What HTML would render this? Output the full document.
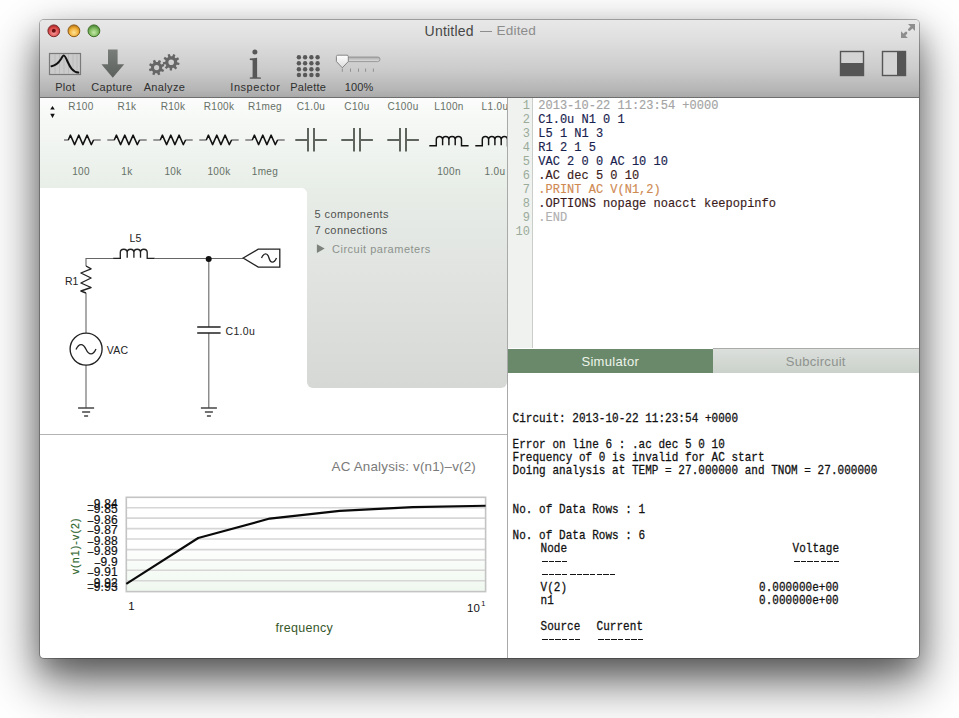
<!DOCTYPE html>
<html><head><meta charset="utf-8">
<style>
html,body{margin:0;padding:0;width:959px;height:718px;overflow:hidden;background:#fff;}
body{position:relative;font-family:"Liberation Sans",sans-serif;}
.t{position:absolute;white-space:pre;line-height:1;}
.mono{font-family:"Liberation Mono",monospace;}
#win{position:absolute;left:40px;top:20px;width:879px;height:638px;border-radius:4px 4px 4px 4px;
 box-shadow:0 22px 50px 2px rgba(0,0,0,0.6), 0 12px 24px 0 rgba(0,0,0,0.22), 0 0 0 1px rgba(0,0,0,0.28);background:#fff;}
#tb{position:absolute;left:40px;top:20px;width:879px;height:77px;border-radius:4px 4px 0 0;background:linear-gradient(#e8e8e8 0px,#e0e0e0 18px,#cbcbcb 50px,#b5b5b5 70px,#a9a9a9 77px);border-bottom:1px solid #6e6e6e;}
svg{position:absolute;left:0;top:0;overflow:visible;}
.tl{font-size:11px;color:#2e2e2e;top:81px;}
</style></head>
<body>

<div id="win"></div><div id="tb"></div>
<div class="t" style="left:424.60px;top:23.95px;font-family:'Liberation Sans';font-size:14px;color:#474747;letter-spacing:0.2px;">Untitled</div>
<div style="position:absolute;left:479.8px;top:31.3px;width:12px;height:1.2px;background:#8e8e8e;"></div>
<div class="t" style="left:496.60px;top:24.29px;font-family:'Liberation Sans';font-size:13.6px;color:#8c8c8c;letter-spacing:0.15px;">Edited</div>
<div class="t" style="left:55.20px;top:82.19px;font-family:'Liberation Sans';font-size:11px;color:#2f2f2f;letter-spacing:0.3px;">Plot</div>
<div class="t" style="left:91.30px;top:82.19px;font-family:'Liberation Sans';font-size:11px;color:#2f2f2f;letter-spacing:0.3px;">Capture</div>
<div class="t" style="left:143.70px;top:82.19px;font-family:'Liberation Sans';font-size:11px;color:#2f2f2f;letter-spacing:0.35px;">Analyze</div>
<div class="t" style="left:230.30px;top:82.19px;font-family:'Liberation Sans';font-size:11px;color:#2f2f2f;letter-spacing:0.55px;">Inspector</div>
<div class="t" style="left:290.20px;top:82.19px;font-family:'Liberation Sans';font-size:11px;color:#2f2f2f;letter-spacing:0.25px;">Palette</div>
<div class="t" style="left:344.80px;top:82.19px;font-family:'Liberation Sans';font-size:11px;color:#2f2f2f;letter-spacing:0.1px;">100%</div>
<svg width="959" height="718" viewBox="0 0 959 718">
<defs>
<radialGradient id="gr" cx="50%" cy="65%" r="60%"><stop offset="0" stop-color="#f7a0a0"/><stop offset="0.6" stop-color="#e25555"/><stop offset="1" stop-color="#b02525"/></radialGradient>
<radialGradient id="go" cx="50%" cy="65%" r="60%"><stop offset="0" stop-color="#fde29a"/><stop offset="0.6" stop-color="#f2b23a"/><stop offset="1" stop-color="#c07a10"/></radialGradient>
<radialGradient id="gg" cx="50%" cy="65%" r="60%"><stop offset="0" stop-color="#c4e8a8"/><stop offset="0.6" stop-color="#80bc60"/><stop offset="1" stop-color="#4e8836"/></radialGradient>
<linearGradient id="arrowg" x1="0" y1="0" x2="0" y2="1"><stop offset="0" stop-color="#7a7e7a"/><stop offset="1" stop-color="#5c605c"/></linearGradient>
<linearGradient id="thumbg" x1="0" y1="0" x2="0" y2="1"><stop offset="0" stop-color="#ffffff"/><stop offset="1" stop-color="#dcdcdc"/></linearGradient>
<linearGradient id="trackg" x1="0" y1="0" x2="0" y2="1"><stop offset="0" stop-color="#a8a8a8"/><stop offset="1" stop-color="#e0e0e0"/></linearGradient>
</defs>
<circle cx="53.8" cy="30.8" r="5.9" fill="url(#gr)" stroke="#7a2a2a" stroke-width="1"/>
<circle cx="53.8" cy="30.8" r="2" fill="#6a1010"/>
<circle cx="73.9" cy="30.8" r="5.9" fill="url(#go)" stroke="#8a5a18" stroke-width="1"/>
<circle cx="93.9" cy="30.8" r="5.9" fill="url(#gg)" stroke="#3e6e28" stroke-width="1"/>
<g fill="#8e8e8e" stroke="#8e8e8e" stroke-width="2.6" stroke-linecap="round"><line x1="911.5" y1="27.5" x2="909.3" y2="29.7"/><line x1="904" y1="35" x2="906" y2="33"/><path d="M915 24 L908 24 L915 31 Z" stroke="none"/><path d="M901 38 L901 31.3 L907.8 38 Z" stroke="none"/></g>
<rect x="840.5" y="51.5" width="23" height="24" fill="#d4d4d4" stroke="#555" stroke-width="1.4"/>
<rect x="840" y="63" width="24" height="13" fill="#555"/>
<rect x="882.5" y="51.5" width="23" height="24" fill="#d4d4d4" stroke="#555" stroke-width="1.4"/>
<rect x="897" y="51" width="9" height="25" fill="#555"/>
<rect x="49.5" y="53.5" width="31" height="21" fill="#cbcbcb" stroke="#7a7a7a" stroke-width="1.2"/>
<line x1="55" y1="54" x2="55" y2="74" stroke="#b8b8b8" stroke-width="0.8"/>
<line x1="59.5" y1="54" x2="59.5" y2="74" stroke="#b8b8b8" stroke-width="0.8"/>
<line x1="64" y1="54" x2="64" y2="74" stroke="#b8b8b8" stroke-width="0.8"/>
<line x1="68.5" y1="54" x2="68.5" y2="74" stroke="#b8b8b8" stroke-width="0.8"/>
<line x1="73" y1="54" x2="73" y2="74" stroke="#b8b8b8" stroke-width="0.8"/>
<line x1="77" y1="54" x2="77" y2="74" stroke="#b8b8b8" stroke-width="0.8"/>
<path d="M51.5 66.2 C56 65.5 58.5 63 61 59 C62 57.2 63 55.5 63.8 55.6 C64.8 55.6 66 58 67.5 61.5 C70 67 72.5 72 78.3 72.6" fill="none" stroke="#111" stroke-width="2" stroke-linecap="round"/>
<path d="M108 49.5 H117.6 V64.2 H124.2 L112.8 77.8 L101.4 64.2 H108 Z" fill="url(#arrowg)"/>
<path d="M162.09 68.71 L164.16 69.89 L163.15 72.01 L160.93 71.15 L159.69 72.27 L160.33 74.57 L158.11 75.35 L157.15 73.17 L155.49 73.09 L154.31 75.16 L152.19 74.15 L153.05 71.93 L151.93 70.69 L149.63 71.33 L148.85 69.11 L151.03 68.15 L151.11 66.49 L149.04 65.31 L150.05 63.19 L152.27 64.05 L153.51 62.93 L152.87 60.63 L155.09 59.85 L156.05 62.03 L157.71 62.11 L158.89 60.04 L161.01 61.05 L160.15 63.27 L161.27 64.51 L163.57 63.87 L164.35 66.09 L162.17 67.05 Z M159.20 67.60 A2.6 2.6 0 1 0 154.00 67.60 A2.6 2.6 0 1 0 159.20 67.60 Z" fill="#666" fill-rule="evenodd"/>
<path d="M177.20 62.20 L179.57 62.90 L179.09 65.07 L176.65 64.72 L175.80 66.06 L177.16 68.12 L175.40 69.47 L173.75 67.63 L172.24 68.11 L171.96 70.57 L169.74 70.47 L169.67 68.00 L168.20 67.40 L166.41 69.10 L164.77 67.60 L166.30 65.66 L165.56 64.25 L163.09 64.40 L162.80 62.20 L165.22 61.70 L165.56 60.15 L163.57 58.68 L164.77 56.80 L166.94 57.97 L168.20 57.00 L167.62 54.60 L169.74 53.93 L170.66 56.22 L172.24 56.29 L173.35 54.08 L175.40 54.93 L174.62 57.27 L175.80 58.34 L178.06 57.36 L179.09 59.33 L176.99 60.63 Z M174.00 62.20 A2.8 2.8 0 1 0 168.40 62.20 A2.8 2.8 0 1 0 174.00 62.20 Z" fill="#666" fill-rule="evenodd"/>
<circle cx="254.9" cy="52.1" r="2.5" fill="#575757"/>
<path d="M249.8 58.6 L257.1 57.8 L257.1 77.2 L260.9 77.4 L260.9 78.8 L249.8 78.8 L249.8 77.4 L252.6 77.2 L252.6 60.2 L249.8 60.0 Z" fill="#575757"/>
<circle cx="298.9" cy="57.3" r="2.2" fill="#585858"/>
<circle cx="298.9" cy="63.2" r="2.2" fill="#585858"/>
<circle cx="298.9" cy="69.2" r="2.2" fill="#585858"/>
<circle cx="298.9" cy="75.0" r="2.2" fill="#585858"/>
<circle cx="305.1" cy="57.3" r="2.2" fill="#585858"/>
<circle cx="305.1" cy="63.2" r="2.2" fill="#585858"/>
<circle cx="305.1" cy="69.2" r="2.2" fill="#585858"/>
<circle cx="305.1" cy="75.0" r="2.2" fill="#585858"/>
<circle cx="311.4" cy="57.3" r="2.2" fill="#585858"/>
<circle cx="311.4" cy="63.2" r="2.2" fill="#585858"/>
<circle cx="311.4" cy="69.2" r="2.2" fill="#585858"/>
<circle cx="311.4" cy="75.0" r="2.2" fill="#585858"/>
<circle cx="317.6" cy="57.3" r="2.2" fill="#585858"/>
<circle cx="317.6" cy="63.2" r="2.2" fill="#585858"/>
<circle cx="317.6" cy="69.2" r="2.2" fill="#585858"/>
<circle cx="317.6" cy="75.0" r="2.2" fill="#585858"/>
<rect x="336.5" y="57" width="43.5" height="4.6" rx="2.3" fill="url(#trackg)" stroke="#8a8a8a" stroke-width="0.8"/>
<line x1="342.3" y1="68.5" x2="342.3" y2="71.8" stroke="#8a8a8a" stroke-width="0.9"/>
<line x1="350.5" y1="68.5" x2="350.5" y2="71.8" stroke="#8a8a8a" stroke-width="0.9"/>
<line x1="358.5" y1="68.5" x2="358.5" y2="71.8" stroke="#8a8a8a" stroke-width="0.9"/>
<line x1="365.6" y1="68.5" x2="365.6" y2="71.8" stroke="#8a8a8a" stroke-width="0.9"/>
<line x1="373.4" y1="68.5" x2="373.4" y2="71.8" stroke="#8a8a8a" stroke-width="0.9"/>
<path d="M336.4 56.5 Q336.4 55.2 337.7 55.2 L347 55.2 Q348.3 55.2 348.3 56.5 L348.3 61.5 L342.3 67.8 L336.4 61.5 Z" fill="url(#thumbg)" stroke="#7a7a7a" stroke-width="0.9"/>
</svg>
<div style="position:absolute;left:40px;top:98px;width:467px;height:90px;background:linear-gradient(#fbfcfb,#f3f6f3 40%,#e8eee8);"></div>
<div style="position:absolute;left:307px;top:187.5px;width:199.5px;height:200.5px;border-radius:0 0 6px 6px;background:linear-gradient(#e8ede8,#e0e3e0 45%,#d5d8d5);"></div>
<div style="position:absolute;left:302px;top:188px;width:5px;height:5px;background:radial-gradient(circle at 0 100%,#fff 0,#fff 4.5px,#e9ede9 5px);"></div>
<div style="position:absolute;left:507px;top:98px;width:1px;height:560px;background:#a9a9a9;"></div>
<div style="position:absolute;left:40px;top:434px;width:467px;height:1px;background:#b4b4b4;"></div>
<div style="position:absolute;left:64px;top:98px;width:443px;height:90px;overflow:hidden;"><div style="position:absolute;left:-64px;top:-98px;width:959px;height:718px;"><div class="t" style="left:51px;top:101.5px;width:60px;text-align:center;font-size:10px;color:#667066;letter-spacing:0.35px;">R100</div><div class="t" style="left:51px;top:167px;width:60px;text-align:center;font-size:10px;color:#667066;letter-spacing:0.35px;">100</div><div class="t" style="left:97px;top:101.5px;width:60px;text-align:center;font-size:10px;color:#667066;letter-spacing:0.35px;">R1k</div><div class="t" style="left:97px;top:167px;width:60px;text-align:center;font-size:10px;color:#667066;letter-spacing:0.35px;">1k</div><div class="t" style="left:143px;top:101.5px;width:60px;text-align:center;font-size:10px;color:#667066;letter-spacing:0.35px;">R10k</div><div class="t" style="left:143px;top:167px;width:60px;text-align:center;font-size:10px;color:#667066;letter-spacing:0.35px;">10k</div><div class="t" style="left:189px;top:101.5px;width:60px;text-align:center;font-size:10px;color:#667066;letter-spacing:0.35px;">R100k</div><div class="t" style="left:189px;top:167px;width:60px;text-align:center;font-size:10px;color:#667066;letter-spacing:0.35px;">100k</div><div class="t" style="left:235px;top:101.5px;width:60px;text-align:center;font-size:10px;color:#667066;letter-spacing:0.35px;">R1meg</div><div class="t" style="left:235px;top:167px;width:60px;text-align:center;font-size:10px;color:#667066;letter-spacing:0.35px;">1meg</div><div class="t" style="left:281px;top:101.5px;width:60px;text-align:center;font-size:10px;color:#667066;letter-spacing:0.35px;">C1.0u</div><div class="t" style="left:327px;top:101.5px;width:60px;text-align:center;font-size:10px;color:#667066;letter-spacing:0.35px;">C10u</div><div class="t" style="left:373px;top:101.5px;width:60px;text-align:center;font-size:10px;color:#667066;letter-spacing:0.35px;">C100u</div><div class="t" style="left:419px;top:101.5px;width:60px;text-align:center;font-size:10px;color:#667066;letter-spacing:0.35px;">L100n</div><div class="t" style="left:419px;top:167px;width:60px;text-align:center;font-size:10px;color:#667066;letter-spacing:0.35px;">100n</div><div class="t" style="left:465px;top:101.5px;width:60px;text-align:center;font-size:10px;color:#667066;letter-spacing:0.35px;">L1.0u</div><div class="t" style="left:465px;top:167px;width:60px;text-align:center;font-size:10px;color:#667066;letter-spacing:0.35px;">1.0u</div><svg width="959" height="718" viewBox="0 0 959 718">
<line x1="61.3" y1="140" x2="68.6" y2="140" stroke="#777" stroke-width="1.5"/>
<line x1="93.3" y1="140" x2="100.69999999999999" y2="140" stroke="#777" stroke-width="1.5"/>
<polyline points="68.3,140 70.39999999999999,135.1 74.6,144.6 78.8,135.1 82.89999999999999,144.6 87.1,135.1 91.3,144.6 93.6,140" fill="none" stroke="#111" stroke-width="1.5" stroke-linejoin="round"/>
<line x1="107.3" y1="140" x2="114.6" y2="140" stroke="#777" stroke-width="1.5"/>
<line x1="139.3" y1="140" x2="146.7" y2="140" stroke="#777" stroke-width="1.5"/>
<polyline points="114.3,140 116.39999999999999,135.1 120.6,144.6 124.8,135.1 128.9,144.6 133.1,135.1 137.3,144.6 139.6,140" fill="none" stroke="#111" stroke-width="1.5" stroke-linejoin="round"/>
<line x1="153.3" y1="140" x2="160.60000000000002" y2="140" stroke="#777" stroke-width="1.5"/>
<line x1="185.3" y1="140" x2="192.70000000000002" y2="140" stroke="#777" stroke-width="1.5"/>
<polyline points="160.3,140 162.4,135.1 166.60000000000002,144.6 170.8,135.1 174.9,144.6 179.10000000000002,135.1 183.3,144.6 185.60000000000002,140" fill="none" stroke="#111" stroke-width="1.5" stroke-linejoin="round"/>
<line x1="199.3" y1="140" x2="206.60000000000002" y2="140" stroke="#777" stroke-width="1.5"/>
<line x1="231.3" y1="140" x2="238.70000000000002" y2="140" stroke="#777" stroke-width="1.5"/>
<polyline points="206.3,140 208.4,135.1 212.60000000000002,144.6 216.8,135.1 220.9,144.6 225.10000000000002,135.1 229.3,144.6 231.60000000000002,140" fill="none" stroke="#111" stroke-width="1.5" stroke-linejoin="round"/>
<line x1="245.3" y1="140" x2="252.60000000000002" y2="140" stroke="#777" stroke-width="1.5"/>
<line x1="277.3" y1="140" x2="284.7" y2="140" stroke="#777" stroke-width="1.5"/>
<polyline points="252.3,140 254.4,135.1 258.6,144.6 262.8,135.1 266.90000000000003,144.6 271.1,135.1 275.3,144.6 277.6,140" fill="none" stroke="#111" stroke-width="1.5" stroke-linejoin="round"/>
<g stroke="#5f645f" stroke-width="2"><line x1="295.3" y1="140" x2="308.0" y2="140"/><line x1="314.0" y1="140" x2="326.90000000000003" y2="140"/><line x1="308.0" y1="128.1" x2="308.0" y2="151.6"/><line x1="314.0" y1="128.1" x2="314.0" y2="151.6"/></g>
<g stroke="#5f645f" stroke-width="2"><line x1="341.3" y1="140" x2="354.0" y2="140"/><line x1="360.0" y1="140" x2="372.90000000000003" y2="140"/><line x1="354.0" y1="128.1" x2="354.0" y2="151.6"/><line x1="360.0" y1="128.1" x2="360.0" y2="151.6"/></g>
<g stroke="#5f645f" stroke-width="2"><line x1="387.3" y1="140" x2="400.0" y2="140"/><line x1="406.0" y1="140" x2="418.90000000000003" y2="140"/><line x1="400.0" y1="128.1" x2="400.0" y2="151.6"/><line x1="406.0" y1="128.1" x2="406.0" y2="151.6"/></g>
<path d="M429.3 145.7 H436.3 V139.5 A3.15 2.99 0 0 1 442.60 139.5 V145.2 V139.5 A3.15 2.99 0 0 1 448.90 139.5 V145.2 V139.5 A3.15 2.99 0 0 1 455.20 139.5 V145.2 V139.5 A3.15 2.99 0 0 1 461.50 139.5 V145.7 H468.6" fill="none" stroke="#111" stroke-width="1.45"/>
<path d="M475.3 145.7 H482.3 V139.5 A3.15 2.99 0 0 1 488.60 139.5 V145.2 V139.5 A3.15 2.99 0 0 1 494.90 139.5 V145.2 V139.5 A3.15 2.99 0 0 1 501.20 139.5 V145.2 V139.5 A3.15 2.99 0 0 1 507.50 139.5 V145.7 H514.6" fill="none" stroke="#111" stroke-width="1.45"/>
</svg></div></div>
<svg width="959" height="718" viewBox="0 0 959 718"><path d="M50.2 109.6 L52.5 106 L54.8 109.6 Z M50.2 113.8 L54.8 113.8 L52.5 117.9 Z" fill="#111"/></svg>
<svg width="959" height="718" viewBox="0 0 959 718"><g fill="none" stroke="#666" stroke-width="1.1"><path d="M86 266 V258.5 H113.1"/><path d="M154.7 258.5 H243.2"/><path d="M86 293 V333"/><path d="M86 365 V408"/><path d="M208.8 258.5 V327"/><path d="M208.8 333 V408"/></g><g fill="none" stroke="#222" stroke-width="1.35"><polyline points="86,266 91.1,268.8 80.9,273 91.1,278 80.9,283 91.1,287.5 80.9,291 86,293" stroke-linejoin="round"/><path d="M113.1 258.3 H120.3 V252.5 C120.30 248.2 127.20 248.2 127.20 252.5 V257.8 V252.5 C127.20 248.2 133.90 248.2 133.90 252.5 V257.8 V252.5 C133.90 248.2 140.50 248.2 140.50 252.5 V257.8 V252.5 C140.50 248.2 147.20 248.2 147.20 252.5 V258.3 H154.7"/><circle cx="86.1" cy="349.1" r="16"/><path d="M76 349.5 C79 343 83 343 86 349.2 C89 355.5 93 355.5 96 349"/><path d="M197.2 327 H220.6 M197.2 333.1 H220.6" stroke-width="1.5"/><path d="M243.2 258 L258.2 249.2 H279.8 V267.1 H258.2 Z" stroke-width="1.3"/><path d="M261.5 258 C264 252.5 267.5 252.5 269 258 C270.5 263.5 274 263.5 276.5 258"/></g><g stroke="#444" stroke-width="1.5"><line x1="78.1" y1="408" x2="94.1" y2="408"/><line x1="82.1" y1="412" x2="90.1" y2="412"/><line x1="84.1" y1="416" x2="88.1" y2="416"/></g><g stroke="#444" stroke-width="1.5"><line x1="200.9" y1="408" x2="216.9" y2="408"/><line x1="204.9" y1="412" x2="212.9" y2="412"/><line x1="206.9" y1="416" x2="210.9" y2="416"/></g><circle cx="208.7" cy="259" r="3" fill="#111"/></svg>
<div class="t" style="left:129.60px;top:233.11px;font-family:'Liberation Sans';font-size:10.5px;color:#222;">L5</div>
<div class="t" style="left:65.00px;top:276.11px;font-family:'Liberation Sans';font-size:10.5px;color:#222;">R1</div>
<div class="t" style="left:106.80px;top:345.11px;font-family:'Liberation Sans';font-size:10.5px;color:#222;letter-spacing:0.2px;">VAC</div>
<div class="t" style="left:225.50px;top:326.11px;font-family:'Liberation Sans';font-size:10.5px;color:#222;letter-spacing:0.3px;">C1.0u</div>
<div class="t" style="left:314.50px;top:208.69px;font-family:'Liberation Sans';font-size:11px;color:#505250;letter-spacing:0.45px;">5 components</div>
<div class="t" style="left:314.50px;top:225.09px;font-family:'Liberation Sans';font-size:11px;color:#505250;letter-spacing:0.4px;">7 connections</div>
<div class="t" style="left:332.00px;top:243.89px;font-family:'Liberation Sans';font-size:11px;color:#8d928d;letter-spacing:0.5px;">Circuit parameters</div>
<svg width="959" height="718" viewBox="0 0 959 718"><path d="M316.9 244.3 L324.7 248.6 L316.9 252.9 Z" fill="#7d827d"/></svg>
<svg width="959" height="718" viewBox="0 0 959 718"><defs><linearGradient id="plotbg" x1="0" y1="0" x2="0" y2="1"><stop offset="0" stop-color="#ffffff"/><stop offset="0.5" stop-color="#ffffff"/><stop offset="1" stop-color="#eff8ef"/></linearGradient></defs><rect x="126.3" y="497.3" width="359.3" height="94" fill="url(#plotbg)"/><line x1="127" y1="507.7" x2="485" y2="507.7" stroke="#d6d6d6" stroke-width="1.6"/><line x1="127" y1="518.1" x2="485" y2="518.1" stroke="#d6d6d6" stroke-width="1.6"/><line x1="127" y1="528.6" x2="485" y2="528.6" stroke="#d6d6d6" stroke-width="1.6"/><line x1="127" y1="539" x2="485" y2="539" stroke="#d6d6d6" stroke-width="1.6"/><line x1="127" y1="549.6" x2="485" y2="549.6" stroke="#d6d6d6" stroke-width="1.6"/><line x1="127" y1="560" x2="485" y2="560" stroke="#d6d6d6" stroke-width="1.6"/><line x1="127" y1="570.3" x2="485" y2="570.3" stroke="#d6d6d6" stroke-width="1.6"/><line x1="127" y1="580.7" x2="485" y2="580.7" stroke="#d6d6d6" stroke-width="1.6"/><rect x="126.3" y="497.3" width="359.3" height="94.3" fill="none" stroke="#c4c4c4" stroke-width="1.6"/><polyline points="126.3,583.8 198.2,538 269.7,518.6 339.7,510.9 412.9,507.1 485.6,505.7" fill="none" stroke="#0a0a0a" stroke-width="2.1" stroke-linejoin="round"/><text x="0" y="0" transform="translate(78.6,545.8) rotate(-90)" text-anchor="middle" font-family="Liberation Sans" font-size="10.5" letter-spacing="1.15" fill="#2f662f" stroke="#2f662f" stroke-width="0.2">v(n1)-v(2)</text></svg>
<div class="t" style="left:60px;top:498.1px;width:58px;text-align:right;font-size:12px;color:#111;letter-spacing:0.25px;transform:scaleY(1.05);-webkit-text-stroke:0.2px #111;"><span style="font-size:10px;position:relative;top:-0.5px;">–</span>9.84</div>
<div class="t" style="left:60px;top:503.2px;width:58px;text-align:right;font-size:12px;color:#111;letter-spacing:0.25px;transform:scaleY(1.05);-webkit-text-stroke:0.2px #111;"><span style="font-size:10px;position:relative;top:-0.5px;">–</span>9.85</div>
<div class="t" style="left:60px;top:513.5px;width:58px;text-align:right;font-size:12px;color:#111;letter-spacing:0.25px;transform:scaleY(1.05);-webkit-text-stroke:0.2px #111;"><span style="font-size:10px;position:relative;top:-0.5px;">–</span>9.86</div>
<div class="t" style="left:60px;top:524.0px;width:58px;text-align:right;font-size:12px;color:#111;letter-spacing:0.25px;transform:scaleY(1.05);-webkit-text-stroke:0.2px #111;"><span style="font-size:10px;position:relative;top:-0.5px;">–</span>9.87</div>
<div class="t" style="left:60px;top:534.6px;width:58px;text-align:right;font-size:12px;color:#111;letter-spacing:0.25px;transform:scaleY(1.05);-webkit-text-stroke:0.2px #111;"><span style="font-size:10px;position:relative;top:-0.5px;">–</span>9.88</div>
<div class="t" style="left:60px;top:545.1px;width:58px;text-align:right;font-size:12px;color:#111;letter-spacing:0.25px;transform:scaleY(1.05);-webkit-text-stroke:0.2px #111;"><span style="font-size:10px;position:relative;top:-0.5px;">–</span>9.89</div>
<div class="t" style="left:60px;top:555.7px;width:58px;text-align:right;font-size:12px;color:#111;letter-spacing:0.25px;transform:scaleY(1.05);-webkit-text-stroke:0.2px #111;"><span style="font-size:10px;position:relative;top:-0.5px;">–</span>9.9</div>
<div class="t" style="left:60px;top:566.2px;width:58px;text-align:right;font-size:12px;color:#111;letter-spacing:0.25px;transform:scaleY(1.05);-webkit-text-stroke:0.2px #111;"><span style="font-size:10px;position:relative;top:-0.5px;">–</span>9.91</div>
<div class="t" style="left:60px;top:576.5px;width:58px;text-align:right;font-size:12px;color:#111;letter-spacing:0.25px;transform:scaleY(1.05);-webkit-text-stroke:0.2px #111;"><span style="font-size:10px;position:relative;top:-0.5px;">–</span>9.92</div>
<div class="t" style="left:60px;top:581.2px;width:58px;text-align:right;font-size:12px;color:#111;letter-spacing:0.25px;transform:scaleY(1.05);-webkit-text-stroke:0.2px #111;"><span style="font-size:10px;position:relative;top:-0.5px;">–</span>9.93</div>
<div class="t" style="left:331.50px;top:459.86px;font-family:'Liberation Sans';font-size:13.4px;color:#7a7a7a;letter-spacing:0.2px;">AC Analysis: v(n1)–v(2)</div>
<div class="t" style="left:128.30px;top:600.57px;font-family:'Liberation Sans';font-size:11.5px;color:#111;">1</div>
<div class="t" style="left:467.00px;top:602.57px;font-family:'Liberation Sans';font-size:11.5px;color:#111;">10</div>
<div class="t" style="left:481.30px;top:600.45px;font-family:'Liberation Sans';font-size:7.5px;color:#111;">1</div>
<div class="t" style="left:275.50px;top:622.22px;font-family:'Liberation Sans';font-size:12.5px;color:#38582a;letter-spacing:0.3px;">frequency</div>
<div style="position:absolute;left:508px;top:98px;width:24px;height:250px;background:#eff2ef;border-right:1px solid #c9cec9;"></div>
<div class="t mono" style="left:490px;top:99.8px;width:40px;text-align:right;font-size:12px;color:#9aab9a;transform:scaleY(1.12);transform-origin:0 80%;">1</div>
<div class="t" style="left:538.30px;top:100.21px;font-family:'Liberation Mono';font-size:12px;color:#a4a4a4;transform:scaleY(1.08);transform-origin:0 80%;-webkit-text-stroke:0.15px #a4a4a4;">2013-10-22 11:23:54 +0000</div>
<div class="t mono" style="left:490px;top:113.8px;width:40px;text-align:right;font-size:12px;color:#9aab9a;transform:scaleY(1.12);transform-origin:0 80%;">2</div>
<div class="t" style="left:538.30px;top:114.21px;font-family:'Liberation Mono';font-size:12px;color:#18224e;transform:scaleY(1.08);transform-origin:0 80%;-webkit-text-stroke:0.15px #18224e;">C1.0u N1 0 1</div>
<div class="t mono" style="left:490px;top:127.8px;width:40px;text-align:right;font-size:12px;color:#9aab9a;transform:scaleY(1.12);transform-origin:0 80%;">3</div>
<div class="t" style="left:538.30px;top:128.21px;font-family:'Liberation Mono';font-size:12px;color:#18224e;transform:scaleY(1.08);transform-origin:0 80%;-webkit-text-stroke:0.15px #18224e;">L5 1 N1 3</div>
<div class="t mono" style="left:490px;top:141.8px;width:40px;text-align:right;font-size:12px;color:#9aab9a;transform:scaleY(1.12);transform-origin:0 80%;">4</div>
<div class="t" style="left:538.30px;top:142.21px;font-family:'Liberation Mono';font-size:12px;color:#18224e;transform:scaleY(1.08);transform-origin:0 80%;-webkit-text-stroke:0.15px #18224e;">R1 2 1 5</div>
<div class="t mono" style="left:490px;top:155.8px;width:40px;text-align:right;font-size:12px;color:#9aab9a;transform:scaleY(1.12);transform-origin:0 80%;">5</div>
<div class="t" style="left:538.30px;top:156.21px;font-family:'Liberation Mono';font-size:12px;color:#18224e;transform:scaleY(1.08);transform-origin:0 80%;-webkit-text-stroke:0.15px #18224e;">VAC 2 0 0 AC 10 10</div>
<div class="t mono" style="left:490px;top:169.8px;width:40px;text-align:right;font-size:12px;color:#9aab9a;transform:scaleY(1.12);transform-origin:0 80%;">6</div>
<div class="t" style="left:538.30px;top:170.21px;font-family:'Liberation Mono';font-size:12px;color:#3b2020;transform:scaleY(1.08);transform-origin:0 80%;-webkit-text-stroke:0.15px #3b2020;">.AC dec 5 0 10</div>
<div class="t mono" style="left:490px;top:183.8px;width:40px;text-align:right;font-size:12px;color:#9aab9a;transform:scaleY(1.12);transform-origin:0 80%;">7</div>
<div class="t" style="left:538.30px;top:184.21px;font-family:'Liberation Mono';font-size:12px;color:#cf8a52;transform:scaleY(1.08);transform-origin:0 80%;-webkit-text-stroke:0.15px #cf8a52;">.PRINT AC V(N1,2)</div>
<div class="t mono" style="left:490px;top:197.8px;width:40px;text-align:right;font-size:12px;color:#9aab9a;transform:scaleY(1.12);transform-origin:0 80%;">8</div>
<div class="t" style="left:538.30px;top:198.21px;font-family:'Liberation Mono';font-size:12px;color:#3a1a1a;transform:scaleY(1.08);transform-origin:0 80%;-webkit-text-stroke:0.15px #3a1a1a;">.OPTIONS nopage noacct keepopinfo</div>
<div class="t mono" style="left:490px;top:211.8px;width:40px;text-align:right;font-size:12px;color:#9aab9a;transform:scaleY(1.12);transform-origin:0 80%;">9</div>
<div class="t" style="left:538.30px;top:212.21px;font-family:'Liberation Mono';font-size:12px;color:#b0b0b0;transform:scaleY(1.08);transform-origin:0 80%;-webkit-text-stroke:0.15px #b0b0b0;">.END</div>
<div class="t mono" style="left:490px;top:225.8px;width:40px;text-align:right;font-size:12px;color:#9aab9a;transform:scaleY(1.12);transform-origin:0 80%;">10</div>
<div style="position:absolute;left:508px;top:348.5px;width:204.5px;height:24px;background:#6a896a;"></div>
<div style="position:absolute;left:712.5px;top:348px;width:206.5px;height:24.5px;background:linear-gradient(#dcdfdc,#cad1ca);border-top:1px solid #a9aca9;box-sizing:border-box;"></div>
<div class="t" style="left:508px;top:355px;width:204.5px;text-align:center;font-size:13px;color:#eef5ea;letter-spacing:0.3px;">Simulator</div>
<div class="t" style="left:712.5px;top:355px;width:206.5px;text-align:center;font-size:13px;color:#8e938e;letter-spacing:0.3px;">Subcircuit</div>
<div class="t" style="left:512.60px;top:414.37px;font-family:'Liberation Mono';font-size:11px;color:#111;letter-spacing:0.03px;transform:scaleY(1.08);transform-origin:0 80%;-webkit-text-stroke:0.25px #111;">Circuit: 2013-10-22 11:23:54 +0000</div>
<div class="t" style="left:512.60px;top:440.37px;font-family:'Liberation Mono';font-size:11px;color:#111;letter-spacing:0.03px;transform:scaleY(1.08);transform-origin:0 80%;-webkit-text-stroke:0.25px #111;">Error on line 6 : .ac dec 5 0 10</div>
<div class="t" style="left:512.60px;top:453.37px;font-family:'Liberation Mono';font-size:11px;color:#111;letter-spacing:0.03px;transform:scaleY(1.08);transform-origin:0 80%;-webkit-text-stroke:0.25px #111;">Frequency of 0 is invalid for AC start</div>
<div class="t" style="left:512.60px;top:466.37px;font-family:'Liberation Mono';font-size:11px;color:#111;letter-spacing:0.03px;transform:scaleY(1.08);transform-origin:0 80%;-webkit-text-stroke:0.25px #111;">Doing analysis at TEMP = 27.000000 and TNOM = 27.000000</div>
<div class="t" style="left:512.60px;top:505.37px;font-family:'Liberation Mono';font-size:11px;color:#111;letter-spacing:0.03px;transform:scaleY(1.08);transform-origin:0 80%;-webkit-text-stroke:0.25px #111;">No. of Data Rows : 1</div>
<div class="t" style="left:512.60px;top:531.37px;font-family:'Liberation Mono';font-size:11px;color:#111;letter-spacing:0.03px;transform:scaleY(1.08);transform-origin:0 80%;-webkit-text-stroke:0.25px #111;">No. of Data Rows : 6</div>
<div class="t" style="left:540.60px;top:544.37px;font-family:'Liberation Mono';font-size:11px;color:#111;letter-spacing:0.03px;transform:scaleY(1.08);transform-origin:0 80%;-webkit-text-stroke:0.25px #111;">Node</div>
<div class="t" style="left:792.60px;top:544.37px;font-family:'Liberation Mono';font-size:11px;color:#111;letter-spacing:0.03px;transform:scaleY(1.08);transform-origin:0 80%;-webkit-text-stroke:0.25px #111;">Voltage</div>
<div style="position:absolute;left:541.50px;top:561px;width:25.52px;height:1.3px;background:repeating-linear-gradient(90deg,#151515 0px,#151515 5.6px,transparent 5.6px,transparent 6.63px);"></div>
<div style="position:absolute;left:793.50px;top:561px;width:45.41px;height:1.3px;background:repeating-linear-gradient(90deg,#151515 0px,#151515 5.6px,transparent 5.6px,transparent 6.63px);"></div>
<div style="position:absolute;left:541.50px;top:574px;width:25.52px;height:1.3px;background:repeating-linear-gradient(90deg,#151515 0px,#151515 5.6px,transparent 5.6px,transparent 6.63px);"></div>
<div style="position:absolute;left:569.50px;top:574px;width:45.41px;height:1.3px;background:repeating-linear-gradient(90deg,#151515 0px,#151515 5.6px,transparent 5.6px,transparent 6.63px);"></div>
<div class="t" style="left:540.60px;top:583.37px;font-family:'Liberation Mono';font-size:11px;color:#111;letter-spacing:0.03px;transform:scaleY(1.08);transform-origin:0 80%;-webkit-text-stroke:0.25px #111;">V(2)</div>
<div class="t" style="left:759.10px;top:583.37px;font-family:'Liberation Mono';font-size:11px;color:#111;letter-spacing:0.03px;transform:scaleY(1.08);transform-origin:0 80%;-webkit-text-stroke:0.25px #111;">0.000000e+00</div>
<div class="t" style="left:540.60px;top:596.37px;font-family:'Liberation Mono';font-size:11px;color:#111;letter-spacing:0.03px;transform:scaleY(1.08);transform-origin:0 80%;-webkit-text-stroke:0.25px #111;">n1</div>
<div class="t" style="left:759.10px;top:596.37px;font-family:'Liberation Mono';font-size:11px;color:#111;letter-spacing:0.03px;transform:scaleY(1.08);transform-origin:0 80%;-webkit-text-stroke:0.25px #111;">0.000000e+00</div>
<div class="t" style="left:540.60px;top:622.37px;font-family:'Liberation Mono';font-size:11px;color:#111;letter-spacing:0.03px;transform:scaleY(1.08);transform-origin:0 80%;-webkit-text-stroke:0.25px #111;">Source</div>
<div class="t" style="left:596.60px;top:622.37px;font-family:'Liberation Mono';font-size:11px;color:#111;letter-spacing:0.03px;transform:scaleY(1.08);transform-origin:0 80%;-webkit-text-stroke:0.25px #111;">Current</div>
<div style="position:absolute;left:541.50px;top:639px;width:38.78px;height:1.3px;background:repeating-linear-gradient(90deg,#151515 0px,#151515 5.6px,transparent 5.6px,transparent 6.63px);"></div>
<div style="position:absolute;left:597.50px;top:639px;width:45.41px;height:1.3px;background:repeating-linear-gradient(90deg,#151515 0px,#151515 5.6px,transparent 5.6px,transparent 6.63px);"></div>
</body></html>
